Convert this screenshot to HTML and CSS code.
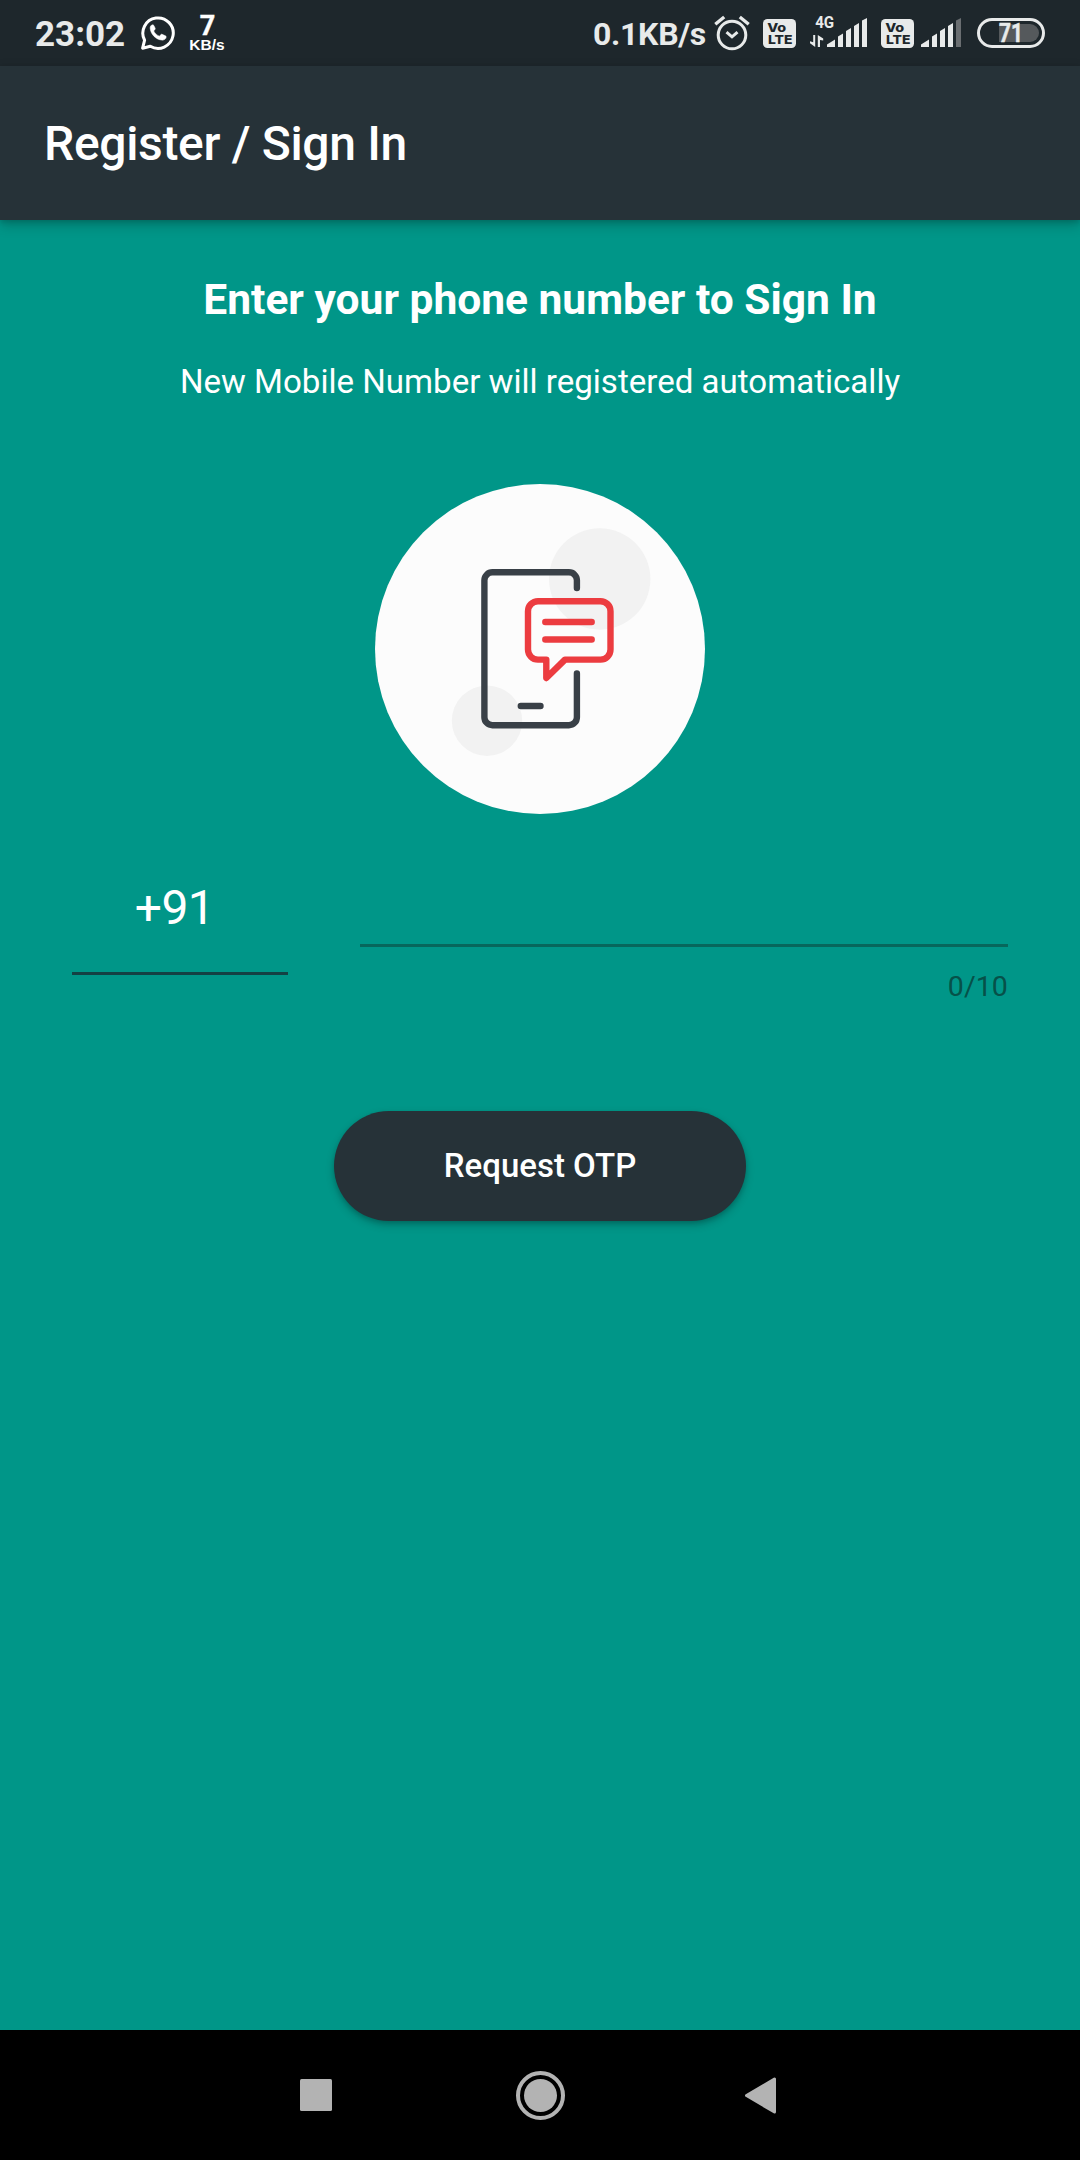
FILE: index.html
```html
<!DOCTYPE html>
<html lang="en">
<head>
<meta charset="utf-8">
<title>Register / Sign In</title>
<link rel="stylesheet" href="styles.css">
</head>
<body>
<div class="screen">
  <div class="status-bar">
    <span class="clock">23:02</span>
    <svg class="whatsapp" width="36" height="36" viewBox="0 0 36 36">
      <path d="M4.600 25.200A15.200 15.200 0 1 1 10.300 31.200L2.600 33.200Z" fill="none" stroke="#fff" stroke-width="3" stroke-linejoin="round"/>
      <path d="M12.600 9.800c-1.700.2-2.700 1.700-2.400 3.900.9 6 5.700 10.700 11.500 11.400 2.300.3 4.300-1.100 4.500-3 .1-.6-.2-1-.8-1.300l-3.300-1.500c-.6-.2-1-.1-1.400.4l-1.200 1.500c-2.600-1-4.600-2.800-5.800-5.300l1.300-1.500c.3-.4.3-.8.1-1.300l-1.300-2.700c-.3-.5-.7-.7-1.200-.6Z" fill="#fff" stroke="#fff" stroke-width=".5"/>
    </svg>
    <span class="speed-note"><span class="speed-value">7</span><span class="speed-unit">KB/s</span></span>
    <span class="net-speed">0.1KB/s</span>
    <svg class="alarm" width="36" height="36" viewBox="0 0 36 36" fill="none" stroke="#e8eaea" stroke-width="3">
      <circle cx="18" cy="20" r="13.800"/>
      <path d="M12.500 17.200l5.500 4.600 5.500-4.600"/>
      <path d="M1.300 9.200L10.200 2M25.800 2L34.700 9.200" stroke-width="3.400"/>
    </svg>
    <svg class="volte" width="33" height="29" viewBox="0 0 33 29">
      <rect width="33" height="29" rx="4.500" fill="#e8eaea"/>
      <text x="4.200" y="12.500" textLength="19" lengthAdjust="spacingAndGlyphs">Vo</text>
      <text x="5" y="25.400" textLength="24.500" lengthAdjust="spacingAndGlyphs">LTE</text>
    </svg>
    <svg class="signal-data" width="58" height="36" viewBox="0 0 58 36" fill="#e8eaea">
      <text x="5.200" y="12.800" textLength="19" lengthAdjust="spacingAndGlyphs">4G</text>
      <path d="M3.200 20h2v12L0 28.200v-2l3.200 1ZM7.800 32h2.200v-7l3.200.5v-2L7.800 20Z"/>
      <path d="M17 32v-2.500l8-5V32ZM28 32V21.500l5-3V32ZM36 32V16l5-3V32ZM44 32V11l5-3V32ZM52 32V5.500l5-2.500V32Z"/>
    </svg>
    <svg class="volte volte-second" width="33" height="29" viewBox="0 0 33 29">
      <rect width="33" height="29" rx="4.500" fill="#e8eaea"/>
      <text x="4.200" y="12.500" textLength="19" lengthAdjust="spacingAndGlyphs">Vo</text>
      <text x="5" y="25.400" textLength="24.500" lengthAdjust="spacingAndGlyphs">LTE</text>
    </svg>
    <svg class="signal" width="40" height="36" viewBox="17 0 40 36" fill="#e8eaea">
      <path d="M17 32v-2.500l8-5V32ZM28 32V21.500l5-3V32ZM36 32V16l5-3V32ZM44 32V11l5-3V32Z"/>
      <path d="M52 32V5.500l5-2.500V32Z" fill="#6a6e71"/>
    </svg>
    <svg class="battery" width="68" height="30" viewBox="0 0 68 30">
      <rect x="1.500" y="1.500" width="65" height="27" rx="13.500" fill="none" stroke="#e8eaea" stroke-width="3"/>
      <path d="M22 6H53a9 9 0 0 1 0 18H22Z" fill="#55595c"/>
      <text x="22" y="23.900" textLength="24" lengthAdjust="spacingAndGlyphs">71</text>
    </svg>
  </div>
  <header class="app-bar"><h1>Register / Sign In</h1></header>
  <main class="content">
    <h2>Enter your phone number to Sign In</h2>
    <p class="subtitle">New Mobile Number will registered automatically</p>
    <svg class="illustration" width="330" height="330" viewBox="15 14 330 330">
      <circle cx="180" cy="179" r="165" fill="#fcfcfc"/>
      <circle cx="239.700" cy="109" r="50.700" fill="#f2f2f2"/>
      <circle cx="127" cy="250.700" r="35.200" fill="#f2f2f2"/>
      <g fill="none" stroke="#394047" stroke-width="6.400" stroke-linecap="round" stroke-linejoin="round">
        <path d="M216.900 118V110.300a8 8 0 0 0-8-8H132.400a8 8 0 0 0-8 8V247.200a8 8 0 0 0 8 8H208.900a8 8 0 0 0 8-8V203.500M160.800 236H180.500"/>
        <path stroke="#ec3c40" d="M178 131.200H240.500a10 10 0 0 1 10 10V179.600a10 10 0 0 1-10 10H205L186.300 208V189.600H178a10 10 0 0 1-10-10V141.200a10 10 0 0 1 10-10ZM185.300 152H231.700M185.300 169.500H231.700"/>
      </g>
    </svg>
    <div class="phone-row">
      <div class="country-code">+91</div>
      <div class="number-field"><div class="number-input"></div><div class="counter">0/10</div></div>
    </div>
    <button class="request">Request OTP</button>
  </main>
  <nav class="nav-bar">
    <svg width="32" height="32" viewBox="0 0 32 32"><rect width="32" height="32" rx="1.500" fill="#b3b3b3"/></svg>
    <svg class="home" width="49" height="49" viewBox="0 0 49 49"><circle cx="24.500" cy="24.500" r="22.500" fill="none" stroke="#b3b3b3" stroke-width="4"/><circle cx="24.500" cy="24.500" r="16.500" fill="#b3b3b3"/></svg>
    <svg class="back" width="31" height="37" viewBox="0 0 31 37"><path d="M1.500 18.500L29.500 2V35Z" fill="#b3b3b3" stroke="#b3b3b3" stroke-width="3" stroke-linejoin="round"/></svg>
  </nav>
</div>
</body>
</html>
```
FILE: styles.css
```css
* { box-sizing: border-box; }

body {
  margin: 0;
  font-family: Roboto, sans-serif;
  color: #fff;
}

h1, h2, p { margin: 0; }
svg { display: block; flex: none; }

.screen {
  width: 1080px;
  height: 2160px;
  display: flex;
  flex-direction: column;
  background: #009688;
}

.status-bar {
  flex: none;
  height: 66px;
  display: flex;
  align-items: flex-start;
  padding: 0 35px;
  background: #1e272c;
  color: #e8eaea;
  white-space: nowrap;
}

.clock {
  width: 106px;
  line-height: 69px;
  font-size: 35px;
  font-weight: 700;
}

.whatsapp { margin: 15px 0 0 -1px; }

.speed-note {
  width: 38px;
  margin: 15px 0 0 12px;
  display: flex;
  flex-direction: column;
  align-items: center;
  color: #fff;
  font-weight: 700;
}

.speed-value { padding-left: 1px; font-size: 27px; line-height: 22px; -webkit-text-stroke: .4px #fff; }
.speed-unit { font: 700 15.500px/15px "Liberation Sans", sans-serif; }

.net-speed {
  width: 121px;
  margin-left: auto;
  line-height: 69px;
  font-size: 32px;
  font-weight: 700;
  letter-spacing: -.3px;
}

.alarm { margin-top: 15px; }
.volte { margin: 19px 0 0 13px; font: 800 12.300px Inter, sans-serif; fill: #1e272c; }
.signal-data { margin: 15px 0 0 14px; font: 700 16.500px Roboto, sans-serif; }
.volte-second { margin-left: 13px; }
.signal { margin: 15px 0 0 7px; }
.battery { margin: 18px 0 0 16px; font: 700 25px Roboto, sans-serif; fill: #e8eaea; }
.battery text { stroke: #e8eaea; stroke-width: .5; }

.app-bar {
  flex: none;
  height: 154px;
  padding: 2px 0 0 44px;
  display: flex;
  align-items: center;
  background: #263238;
  box-shadow: 0 5px 12px rgba(0, 0, 0, .22), 0 2px 5px rgba(0, 0, 0, .12);
}

.app-bar h1 { font-size: 48px; line-height: 56px; font-weight: 500; letter-spacing: -.33px; }

.content {
  flex: 1;
  display: flex;
  flex-direction: column;
  align-items: center;
}

.content h2 { margin-top: 55px; font-size: 42.500px; line-height: 50px; font-weight: 700; }
.subtitle { margin-top: 37px; font-size: 33.100px; line-height: 40px; }
.illustration { margin-top: 82px; }

.phone-row {
  width: 936px;
  margin-top: 66px;
  display: flex;
  justify-content: space-between;
  align-items: flex-start;
}

.country-code {
  width: 216px;
  height: 95px;
  padding-right: 11px;
  border-bottom: 3px solid #144144;
  text-align: center;
  font-size: 48px;
  line-height: 56px;
  letter-spacing: -.6px;
}

.number-field { width: 648px; }
.number-input { height: 67px; border-bottom: 3px solid #07675c; }

.counter {
  padding-top: 23px;
  text-align: right;
  font-size: 28.500px;
  line-height: 34px;
  letter-spacing: .1px;
  color: #065149;
}

.request {
  width: 412px;
  height: 110px;
  margin-top: 107px;
  border: 0;
  border-radius: 55px;
  background: #263238;
  box-shadow: 0 4px 8px rgba(0, 0, 0, .22), 0 2px 4px rgba(0, 0, 0, .12);
  color: #fff;
  font: 500 33px/40px Roboto, sans-serif;
}

.nav-bar {
  flex: none;
  height: 130px;
  padding-left: 300px;
  display: flex;
  align-items: center;
  background: #000;
}

.home { margin-left: 184px; }
.back { margin-left: 180px; }
```
